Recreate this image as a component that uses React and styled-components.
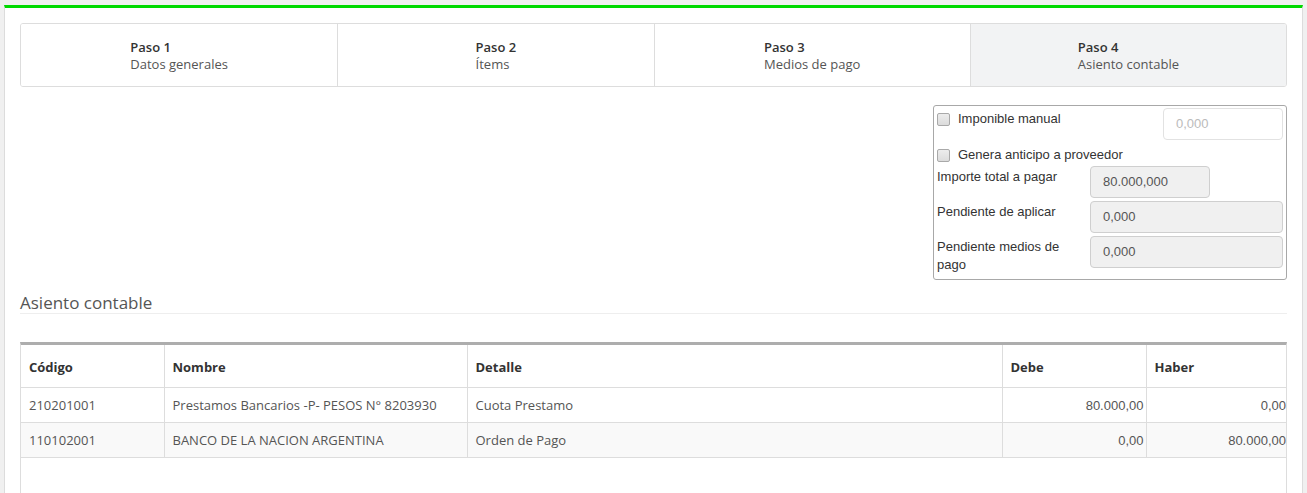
import React from "react";
import styled, { createGlobalStyle } from "styled-components";

const Global = createGlobalStyle`
  html, body { margin: 0; padding: 0; }
  body {
    background: #f0f0f0;
    padding: 5px 4px 0 4px;
    font-family: "Open Sans", sans-serif;
    font-size: 13px;
    color: #555;
  }
  * { box-sizing: border-box; }
`;

const Panel = styled.div`
  background: #fff;
  border-top: 3px solid #00d900;
  border-left: 1px solid #dcdcdc;
  border-right: 1px solid #dcdcdc;
  padding: 15px 15px 0 15px;
  min-height: 500px;
`;

const Steps = styled.div`
  display: grid;
  grid-template-columns: repeat(4, 1fr);
  border: 1px solid #ddd;
  border-radius: 3px;
  overflow: hidden;
`;

const Step = styled.div`
  text-align: center;
  padding: 15px 0 13px 0;
  line-height: 17px;
  background: ${(p) => (p.$active ? "#f2f3f4" : "#fff")};
  & + & { border-left: 1px solid #ddd; }
`;

const StepInner = styled.div`
  display: inline-block;
  text-align: left;
`;

const StepNum = styled.div`
  font-weight: 600;
  color: #333;
`;

const StepName = styled.div`
  color: #555;
`;

const FormBox = styled.div`
  width: 354px;
  margin: 18px 0 0 auto;
  border: 1px solid #a8a8a8;
  border-radius: 3px;
  padding: 2px 3px 5px 3px;
  font-family: "Liberation Sans", Arial, sans-serif;
  font-size: 13px;
  color: #333;
`;

const TopRow = styled.div`
  display: flex;
  justify-content: space-between;
  align-items: flex-start;
`;

const CheckLabel = styled.label`
  display: flex;
  align-items: center;
  gap: 8px;
  line-height: 18px;
  margin-top: ${(p) => p.$mt}px;
`;

const Check = styled.input.attrs({ type: "checkbox" })`
  appearance: none;
  margin: 1px 0 0 0;
  width: 13px;
  height: 13px;
  border: 1px solid #a9a9a9;
  border-radius: 2px;
  background: linear-gradient(#ececec, #dcdcdc);
`;

const Field = styled.input`
  height: 32px;
  width: ${(p) => p.$w || "100%"};
  justify-self: start;
  border: 1px solid ${(p) => (p.readOnly ? "#cfcfcf" : "#e2e2e2")};
  border-radius: 4px;
  background: ${(p) => (p.readOnly ? "#f0f0f0" : "#fff")};
  padding: 0 12px 1px 12px;
  font-family: "Liberation Sans", Arial, sans-serif;
  font-size: 13px;
  color: #555;
  &::placeholder { color: #bbb; }
`;

const FieldGrid = styled.div`
  display: grid;
  grid-template-columns: 148px 1fr;
  column-gap: 5px;
  row-gap: 3px;
  margin-top: 2px;
  align-items: start;
`;

const FieldLabel = styled.div`
  line-height: 18px;
  padding-top: 2px;
`;

const Heading = styled.h4`
  margin: 13px 0 0 0;
  font-family: "Open Sans", sans-serif;
  font-weight: 400;
  font-size: 17px;
  line-height: 20px;
  color: #555;
  border-bottom: 1px solid #eee;
`;

const TableWrap = styled.div`
  margin-top: 28px;
  border: 1px solid #ddd;
  border-top: 3px solid #adadad;
  min-height: 200px;
`;

const Table = styled.table`
  width: 100%;
  border-collapse: collapse;
  table-layout: fixed;
`;

const Th = styled.th`
  height: 42px;
  padding: 2px 8px 0 8px;
  text-align: left;
  font-weight: 700;
  color: #333;
  border-bottom: 1px solid #ddd;
  border-right: 1px solid #ddd;
  &:last-child { border-right: none; }
`;

const Tr = styled.tr`
  background: ${(p) => (p.$striped ? "#f9f9f9" : "#fff")};
`;

const Td = styled.td`
  height: 35px;
  padding: 1px ${(p) => (p.$num ? `${p.$pr}px` : "8px")} 0 8px;
  text-align: ${(p) => (p.$num ? "right" : "left")};
  font-family: ${(p) =>
    p.$num ? '"Liberation Sans", Arial, sans-serif' : '"Open Sans", sans-serif'};
  color: #555;
  border-bottom: 1px solid #ddd;
  border-right: 1px solid #ddd;
  white-space: nowrap;
  &:last-child { border-right: none; }
`;

const steps = [
  ["Paso 1", "Datos generales"],
  ["Paso 2", "Ítems"],
  ["Paso 3", "Medios de pago"],
  ["Paso 4", "Asiento contable"],
];

const rows = [
  ["210201001", "Prestamos Bancarios -P- PESOS N° 8203930", "Cuota Prestamo", "80.000,00", "0,00"],
  ["110102001", "BANCO DE LA NACION ARGENTINA", "Orden de Pago", "0,00", "80.000,00"],
];

export default function App() {
  return (
    <>
      <Global />
      <Panel>
        <Steps>
          {steps.map(([n, l], i) => (
            <Step key={n} $active={i === 3}>
              <StepInner>
                <StepNum>{n}</StepNum>
                <StepName>{l}</StepName>
              </StepInner>
            </Step>
          ))}
        </Steps>

        <FormBox>
          <TopRow>
            <CheckLabel $mt={2}>
              <Check />
              Imponible manual
            </CheckLabel>
            <Field $w="120px" placeholder="0,000" />
          </TopRow>
          <CheckLabel $mt={6}>
            <Check />
            Genera anticipo a proveedor
          </CheckLabel>
          <FieldGrid>
            <FieldLabel>Importe total a pagar</FieldLabel>
            <Field $w="120px" readOnly value="80.000,000" />
            <FieldLabel>Pendiente de aplicar</FieldLabel>
            <Field readOnly value="0,000" />
            <FieldLabel>Pendiente medios de pago</FieldLabel>
            <Field readOnly value="0,000" />
          </FieldGrid>
        </FormBox>

        <Heading>Asiento contable</Heading>

        <TableWrap>
          <Table>
            <colgroup>
              <col style={{ width: 143 }} />
              <col style={{ width: 303 }} />
              <col style={{ width: 535 }} />
              <col style={{ width: 144 }} />
              <col />
            </colgroup>
            <thead>
              <tr>
                <Th>Código</Th>
                <Th>Nombre</Th>
                <Th>Detalle</Th>
                <Th>Debe</Th>
                <Th>Haber</Th>
              </tr>
            </thead>
            <tbody>
              {rows.map((r, i) => (
                <Tr key={r[0]} $striped={i % 2 === 1}>
                  <Td>{r[0]}</Td>
                  <Td>{r[1]}</Td>
                  <Td>{r[2]}</Td>
                  <Td $num $pr={2}>{r[3]}</Td>
                  <Td $num $pr={0}>{r[4]}</Td>
                </Tr>
              ))}
            </tbody>
          </Table>
        </TableWrap>
      </Panel>
    </>
  );
}
